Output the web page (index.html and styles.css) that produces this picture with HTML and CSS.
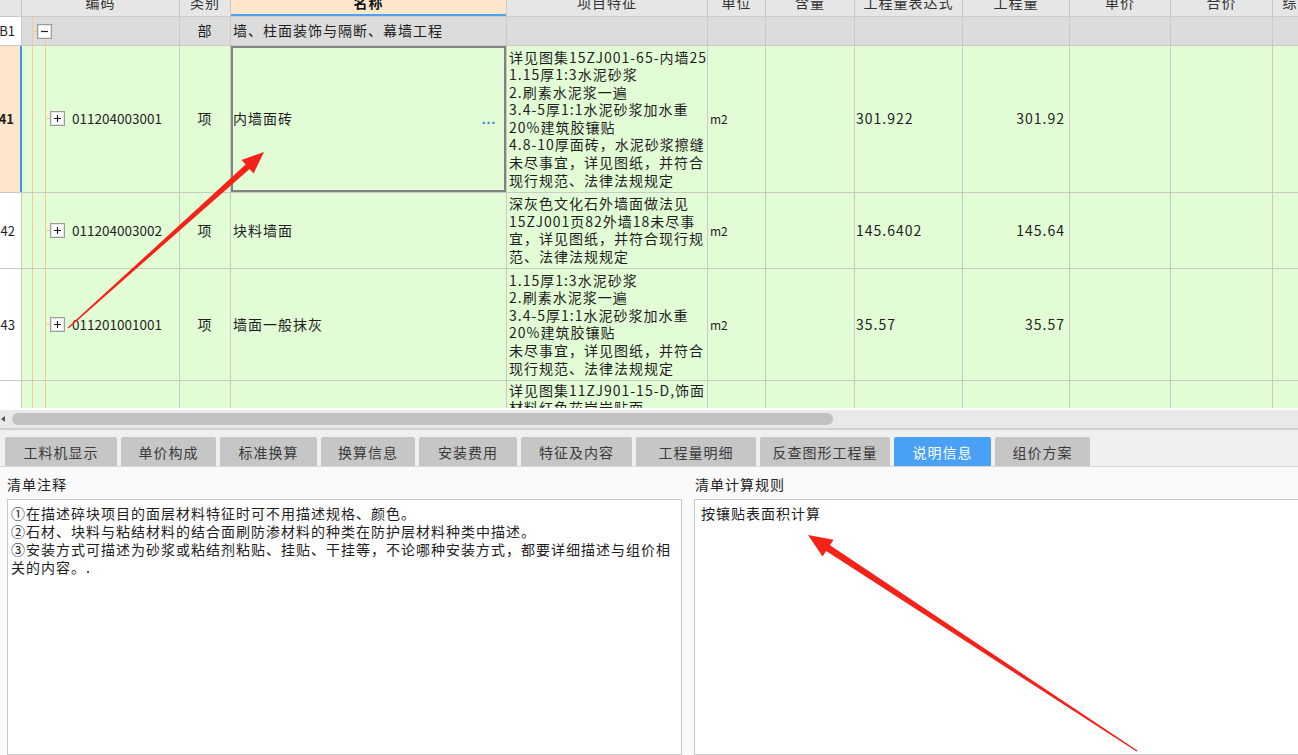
FILE: index.html
```html
<!DOCTYPE html>
<html lang="zh-CN">
<head>
<meta charset="utf-8">
<title>清单说明信息</title>
<link rel="stylesheet" href="styles.css">
</head>
<body>
<div class="app">
  <div class="grid">
    <div class="row hd">
      <div class="c num"></div>
      <div class="c code"><span>编码</span></div>
      <div class="c type"><span>类别</span></div>
      <div class="c name cur"><span>名称</span></div>
      <div class="c feat"><span>项目特征</span></div>
      <div class="c unit"><span>单位</span></div>
      <div class="c cont"><span>含量</span></div>
      <div class="c expr"><span>工程量表达式</span></div>
      <div class="c qty"><span>工程量</span></div>
      <div class="c price"><span>单价</span></div>
      <div class="c total"><span>合价</span></div>
      <div class="c more"><span>综合单价</span></div>
    </div>

    <div class="row grp">
      <div class="c num">B1</div>
      <div class="c code">
        <span class="tick"></span>
        <svg class="pm" viewBox="0 0 15 15"><rect x="0.5" y="0.5" width="14" height="14" fill="#fff" stroke="#9c9c9c"/><rect x="1.5" y="1.5" width="12" height="12" fill="none" stroke="#e4e4e4"/><path d="M4 7.5H11" stroke="#222" stroke-width="1.2"/></svg>
      </div>
      <div class="c type">部</div>
      <div class="c name">墙、柱面装饰与隔断、幕墙工程</div>
      <div class="c feat"></div>
      <div class="c unit"></div>
      <div class="c cont"></div>
      <div class="c expr"></div>
      <div class="c qty"></div>
      <div class="c price"></div>
      <div class="c total"></div>
      <div class="c more"></div>
    </div>

    <div class="row item sel">
      <div class="c num">41</div>
      <div class="c code">
        <span class="tick"></span>
        <svg class="pm" viewBox="0 0 15 15"><rect x="0.5" y="0.5" width="14" height="14" fill="#fff" stroke="#9c9c9c"/><rect x="1.5" y="1.5" width="12" height="12" fill="none" stroke="#e4e4e4"/><path d="M4 7.5H11M7.5 4V11" stroke="#222" stroke-width="1.2"/></svg>
        <span>011204003001</span>
      </div>
      <div class="c type">项</div>
      <div class="c name focus"><span>内墙面砖</span><span class="dots">…</span></div>
      <div class="c feat">
        <div>详见图集15ZJ001-65-内墙25</div>
        <div>1.15厚1:3水泥砂浆</div>
        <div>2.刷素水泥浆一遍</div>
        <div>3.4-5厚1:1水泥砂浆加水重</div>
        <div>20%建筑胶镶贴</div>
        <div>4.8-10厚面砖，水泥砂浆擦缝</div>
        <div>未尽事宜，详见图纸，并符合</div>
        <div>现行规范、法律法规规定</div>
      </div>
      <div class="c unit">m2</div>
      <div class="c cont"></div>
      <div class="c expr">301.922</div>
      <div class="c qty">301.92</div>
      <div class="c price"></div>
      <div class="c total"></div>
      <div class="c more"></div>
    </div>

    <div class="row item">
      <div class="c num">42</div>
      <div class="c code">
        <span class="tick"></span>
        <svg class="pm" viewBox="0 0 15 15"><rect x="0.5" y="0.5" width="14" height="14" fill="#fff" stroke="#9c9c9c"/><rect x="1.5" y="1.5" width="12" height="12" fill="none" stroke="#e4e4e4"/><path d="M4 7.5H11M7.5 4V11" stroke="#222" stroke-width="1.2"/></svg>
        <span>011204003002</span>
      </div>
      <div class="c type">项</div>
      <div class="c name">块料墙面</div>
      <div class="c feat">
        <div>深灰色文化石外墙面做法见</div>
        <div>15ZJ001页82外墙18未尽事</div>
        <div>宜，详见图纸，并符合现行规</div>
        <div>范、法律法规规定</div>
      </div>
      <div class="c unit">m2</div>
      <div class="c cont"></div>
      <div class="c expr">145.6402</div>
      <div class="c qty">145.64</div>
      <div class="c price"></div>
      <div class="c total"></div>
      <div class="c more"></div>
    </div>

    <div class="row item">
      <div class="c num">43</div>
      <div class="c code">
        <span class="tick"></span>
        <svg class="pm" viewBox="0 0 15 15"><rect x="0.5" y="0.5" width="14" height="14" fill="#fff" stroke="#9c9c9c"/><rect x="1.5" y="1.5" width="12" height="12" fill="none" stroke="#e4e4e4"/><path d="M4 7.5H11M7.5 4V11" stroke="#222" stroke-width="1.2"/></svg>
        <span>011201001001</span>
      </div>
      <div class="c type">项</div>
      <div class="c name">墙面一般抹灰</div>
      <div class="c feat">
        <div>1.15厚1:3水泥砂浆</div>
        <div>2.刷素水泥浆一遍</div>
        <div>3.4-5厚1:1水泥砂浆加水重</div>
        <div>20%建筑胶镶贴</div>
        <div>未尽事宜，详见图纸，并符合</div>
        <div>现行规范、法律法规规定</div>
      </div>
      <div class="c unit">m2</div>
      <div class="c cont"></div>
      <div class="c expr">35.57</div>
      <div class="c qty">35.57</div>
      <div class="c price"></div>
      <div class="c total"></div>
      <div class="c more"></div>
    </div>

    <div class="row item last">
      <div class="c num"></div>
      <div class="c code"></div>
      <div class="c type"></div>
      <div class="c name"></div>
      <div class="c feat">
        <div>详见图集11ZJ901-15-D,饰面</div>
        <div>材料红色花岗岩贴面</div>
        <div>未尽事宜，详见图纸，并符合</div>
      </div>
      <div class="c unit"></div>
      <div class="c cont"></div>
      <div class="c expr"></div>
      <div class="c qty"></div>
      <div class="c price"></div>
      <div class="c total"></div>
      <div class="c more"></div>
    </div>
  </div>

  <div class="hscroll">
    <span class="larrow"></span>
    <div class="thumb"></div>
  </div>

  <div class="tabs">
    <div class="tab">工料机显示</div>
    <div class="tab">单价构成</div>
    <div class="tab">标准换算</div>
    <div class="tab">换算信息</div>
    <div class="tab">安装费用</div>
    <div class="tab">特征及内容</div>
    <div class="tab">工程量明细</div>
    <div class="tab">反查图形工程量</div>
    <div class="tab active">说明信息</div>
    <div class="tab">组价方案</div>
  </div>

  <div class="panel">
    <section class="pane left">
      <div class="label">清单注释</div>
      <div class="box">
        <div>①在描述碎块项目的面层材料特征时可不用描述规格、颜色。</div>
        <div>②石材、块料与粘结材料的结合面刷防渗材料的种类在防护层材料种类中描述。</div>
        <div>③安装方式可描述为砂浆或粘结剂粘贴、挂贴、干挂等，不论哪种安装方式，都要详细描述与组价相</div>
        <div>关的内容。.</div>
      </div>
    </section>
    <section class="pane right">
      <div class="label">清单计算规则</div>
      <div class="box">
        <div>按镶贴表面积计算</div>
      </div>
    </section>
  </div>

  <svg class="marks" width="1298" height="755" viewBox="0 0 1298 755">
    <polygon fill="#f5221a" points="67.6,327.5 245.6,164.5 241.6,160 264,152 253.6,173.4 249.6,168.9 68.4,328.5"/>
    <polygon fill="#f5221a" points="1137.4,750.4 830,545.3 833.6,539.8 808,535 822.6,556.6 826.2,551.1 1136.6,751.6"/>
  </svg>
</div>
</body>
</html>
```

FILE: styles.css
```css
* { box-sizing: border-box; }

html, body {
  margin: 0;
  padding: 0;
}

body {
  width: 1298px;
  height: 755px;
  overflow: hidden;
  background: #f0f0f0;
  font-family: "Noto Sans CJK SC", "Noto Sans", sans-serif;
  color: #1e1e1e;
}

.app {
  position: relative;
  width: 1298px;
  height: 755px;
  display: flex;
  flex-direction: column;
  overflow: hidden;
}

/* ---------- grid ---------- */
.grid {
  flex: none;
  height: 408px;
  overflow: hidden;
  background: #fff;
}

.row {
  display: grid;
  grid-template-columns: 22px 158px 51px 276px 201px 58px 89px 108px 107px 101px 102px 80px;
  width: 1353px;
  border-bottom: 1px solid #c9c9c9;
}

.c {
  display: flex;
  align-items: center;
  min-width: 0;
  overflow: hidden;
  white-space: nowrap;
  border-right: 1px solid #c9c9c9;
  font-size: 14px;
  line-height: 17.6px;
  letter-spacing: 1px;
}

/* header */
.row.hd {
  height: 17px;
  background: #e6e6e6;
}
.hd .c {
  flex-direction: row;
  align-items: flex-end;
  justify-content: center;
  color: #333;
  padding: 0;
}
.hd .c span {
  line-height: 18px;
  margin-bottom: 5px;
}
.hd .name.cur {
  background: #fde6c9;
  box-shadow: inset 0 -2px 0 #4ea2f4;
  font-weight: bold;
  color: #111;
}

/* group row */
.row.grp {
  height: 29px;
  background: #dcdcdc;
}

/* item rows */
.row.item {
  background: #e2fcd6;
}

.num {
  justify-content: flex-end;
  padding-right: 6px;
  background: #fff;
  font-size: 13px;
  letter-spacing: 0;
}
.hd .num { background: #e6e6e6; }
.sel .num {
  background: #fde6c9;
  font-weight: bold;
  border-right: 2px solid #3d94f2;
}

.code {
  padding-left: 10px;
  font-size: 13.5px;
  letter-spacing: 0;
  background-image: linear-gradient(#f7c98f, #f7c98f), linear-gradient(#f7c98f, #f7c98f);
  background-size: 1px 100%, 1px 100%;
  background-position: 10px 0, 23px 0;
  background-repeat: no-repeat;
}
.hd .code { background-image: none; font-size: 14px; letter-spacing: 1px; }
.grp .code { background-position: 10px 0, 23px 21px; }
.item .code { padding-left: 23px; }

.tick {
  flex: none;
  width: 5px;
  height: 1px;
  background: #f7c98f;
}
.pm {
  flex: none;
  display: block;
  width: 15px;
  height: 15px;
}
.item .pm { margin-right: 7px; }

.type { justify-content: center; }

.name {
  padding-left: 2px;
}
.name.focus {
  justify-content: space-between;
  padding-right: 10px;
  box-shadow: inset 0 0 0 2px #828282;
}
.dots {
  color: #3d8fe6;
  font-family: "Liberation Sans", sans-serif;
  font-size: 15px;
  font-weight: bold;
  letter-spacing: 0;
}

.feat {
  flex-direction: column;
  align-items: flex-start;
  justify-content: center;
  padding: 2.5px 0 2.5px 2px;
}
.last .feat {
  justify-content: flex-start;
  padding-top: 1px;
}

.unit {
  padding-left: 2px;
  font-size: 12px;
  letter-spacing: 0;
}
.hd .unit { font-size: 14px; letter-spacing: 1px; }
.expr { padding-left: 1px; }
.qty {
  justify-content: flex-end;
  padding-right: 4px;
}
.hd .qty { justify-content: center; }

/* ---------- horizontal scrollbar ---------- */
.hscroll {
  flex: none;
  position: relative;
  height: 22px;
  background: #e9e9e9;
  border-top: 2px solid #fff;
  border-bottom: 2px solid #d0d0d0;
  padding: 3px 0 0 12px;
}
.thumb {
  width: 821px;
  height: 12px;
  border-radius: 6px;
  background: #c2c2c2;
}
.larrow {
  position: absolute;
  left: 1px;
  top: 6px;
  width: 0;
  height: 0;
  border-top: 3.5px solid transparent;
  border-bottom: 3.5px solid transparent;
  border-right: 4px solid #555;
}

/* ---------- tabs ---------- */
.tabs {
  flex: none;
  display: flex;
  gap: 4px;
  height: 37px;
  padding: 7px 0 0 5px;
  background: #f0f0f0;
  border-bottom: 1px solid #d6d6d6;
}
.tab {
  height: 29px;
  display: flex;
  align-items: center;
  justify-content: center;
  background: #c6c6c6;
  color: #3a3a3a;
  font-size: 14px;
  letter-spacing: 1px;
  border-radius: 2px 2px 0 0;
}
.tab:nth-child(1) { width: 112px; }
.tab:nth-child(2) { width: 95px; }
.tab:nth-child(3) { width: 97px; }
.tab:nth-child(4) { width: 94px; }
.tab:nth-child(5) { width: 98px; }
.tab:nth-child(6) { width: 111px; }
.tab:nth-child(7) { width: 120px; }
.tab:nth-child(8) { width: 130px; }
.tab:nth-child(9) { width: 97px; }
.tab:nth-child(10) { width: 95px; }
.tab.active {
  background: #4a9ff7;
  color: #fff;
}

/* ---------- description panel ---------- */
.panel {
  flex: 1;
  display: flex;
  gap: 12px;
  padding-left: 7px;
  background: #fafafa;
  min-height: 0;
}
.pane {
  display: flex;
  flex-direction: column;
}
.pane.left { width: 675px; flex: none; }
.pane.right { flex: 1; }

.label {
  flex: none;
  height: 32px;
  padding: 8px 0 0 0;
  font-size: 14px;
  line-height: 18px;
  letter-spacing: 1px;
  color: #222;
}
.right .label { padding-left: 1px; }

.box {
  flex: 1;
  background: #fff;
  border: 1px solid #c8c8c8;
  padding: 4px 0 0 3px;
  font-size: 14px;
  line-height: 18px;
  letter-spacing: 1px;
  white-space: nowrap;
  overflow: hidden;
  color: #1e1e1e;
}
.right .box {
  border-right: none;
  padding-left: 6px;
}

/* ---------- annotation arrows ---------- */
.marks {
  position: absolute;
  left: 0;
  top: 0;
  pointer-events: none;
}
```
